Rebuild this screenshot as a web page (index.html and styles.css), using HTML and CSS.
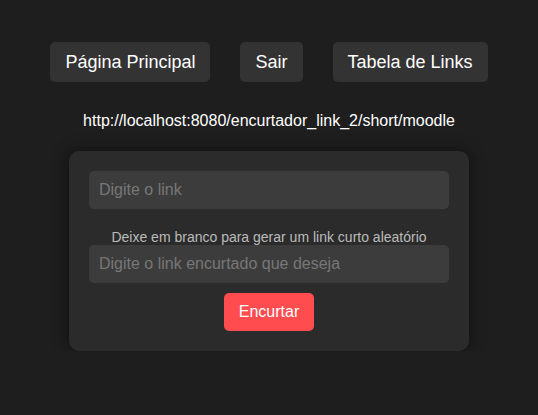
FILE: index.html
```html
<!DOCTYPE html>
<html lang="pt-BR">
<head>
<meta charset="utf-8">
<title>Encurtador de Links</title>
<link rel="stylesheet" href="styles.css">
</head>
<body>
<nav class="nav">
  <a class="nav-btn" href="#">Página Principal</a>
  <a class="nav-btn" href="#">Sair</a>
  <a class="nav-btn" href="#">Tabela de Links</a>
</nav>
<p class="url">http://localhost:8080/encurtador_link_2/short/moodle</p>
<form class="card">
  <input class="field" type="text" placeholder="Digite o link">
  <label class="hint">Deixe em branco para gerar um link curto aleatório</label>
  <input class="field" type="text" placeholder="Digite o link encurtado que deseja">
  <button class="submit" type="button">Encurtar</button>
</form>
</body>
</html>
```
FILE: styles.css
```css
html, body {
  margin: 0;
  background: #1e1e1e;
}
body {
  font-family: "Liberation Sans", Arial, sans-serif;
  color: #fff;
  padding-top: 42px;
  display: flex;
  flex-direction: column;
  align-items: center;
}
.nav {
  display: flex;
  gap: 30px;
}
.nav-btn {
  display: block;
  background: #333333;
  color: #fff;
  text-decoration: none;
  font-size: 18px;
  line-height: 20px;
  padding: 10px 15px;
  border-radius: 5px;
}
.url {
  margin: 30px 0 0;
  font-size: 16px;
  line-height: 18px;
}
.card {
  margin-top: 21px;
  width: 360px;
  padding: 20px;
  background: #2b2b2b;
  border-radius: 10px;
  box-shadow: 0 0 15px rgba(0, 0, 0, 0.5);
  display: flex;
  flex-direction: column;
  align-items: center;
}
.field {
  box-sizing: border-box;
  width: 360px;
  height: 38px;
  margin: 0;
  padding: 0 10px;
  border: none;
  border-radius: 5px;
  background: #3c3c3c;
  color: #fff;
  font-family: "Liberation Sans", Arial, sans-serif;
  font-size: 16px;
  outline: none;
}
.field::placeholder {
  color: #777;
}
.hint {
  margin-top: 20px;
  font-size: 14px;
  line-height: 16px;
  color: #bbb;
}
.submit {
  margin-top: 10px;
  width: 90px;
  height: 38px;
  border: none;
  border-radius: 5px;
  background: #ff4c4f;
  color: #fff;
  font-family: "Liberation Sans", Arial, sans-serif;
  font-size: 16px;
}
```
